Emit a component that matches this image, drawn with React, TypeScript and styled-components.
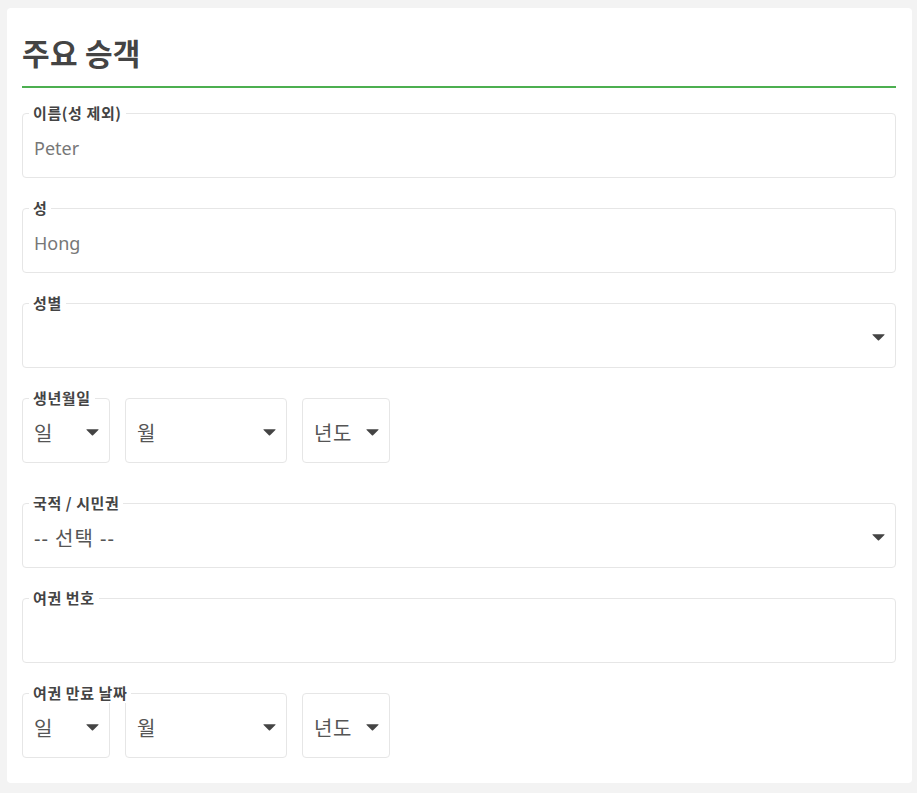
import React from "react";
import styled, { createGlobalStyle } from "styled-components";

const Global = createGlobalStyle`
  html, body { margin: 0; padding: 0; background: #f3f3f3; }
  body { font-family: "Noto Sans", "Noto Sans CJK KR", sans-serif; }
  * { box-sizing: border-box; }
`;

const Page = styled.div`
  padding: 8px 5px 10px 7px;
`;

const Card = styled.section`
  background: #fff;
  border-radius: 4px;
  padding: 0 16px 25px 15px;
  display: flex;
  flex-direction: column;
`;

const Title = styled.h2`
  margin: 0;
  padding: 25px 0 15px 0;
  font-family: "Noto Sans CJK KR", sans-serif;
  font-size: 30px;
  font-weight: 700;
  line-height: 38px;
  letter-spacing: 0.3px;
  color: #444;
  border-bottom: 2px solid #4caf50;
`;

const Fields = styled.div`
  display: flex;
  flex-direction: column;
  padding-top: 25px;
`;

const Group = styled.div<{ $gap: number }>`
  position: relative;
  margin-bottom: ${(p) => p.$gap}px;
  &:last-child { margin-bottom: 0; }
`;

const Legend = styled.span`
  position: absolute;
  top: -10px;
  left: 7px;
  padding: 0 4px;
  background: #fff;
  font-family: "Noto Sans CJK KR", sans-serif;
  font-size: 15px;
  font-weight: 700;
  line-height: 20px;
  letter-spacing: 0.6px;
  color: #444;
  z-index: 1;
`;

const Box = styled.div<{ $w?: number }>`
  height: 65px;
  width: ${(p) => (p.$w ? `${p.$w}px` : "100%")};
  border: 1px solid #e6e6e6;
  border-radius: 4px;
  display: flex;
  align-items: center;
  justify-content: space-between;
  padding: 4px 10px 0 10px;
  background: #fff;
`;

const Value = styled.span<{ $size?: number; $color?: string; $ls?: number }>`
  font-family: "Noto Sans", "Noto Sans CJK KR", sans-serif;
  font-size: ${(p) => p.$size ?? 18}px;
  color: ${(p) => p.$color ?? "#777"};
  letter-spacing: ${(p) => p.$ls ?? 0}px;
  padding-left: 1px;
`;

const Row = styled.div`
  display: flex;
  gap: 15px;
`;

const Caret = () => (
  <svg width="13" height="7" viewBox="0 0 13 7" aria-hidden>
    <path d="M0.8 0.3 H12.2 Q12.9 0.3 12.4 0.9 L7.1 6.3 Q6.5 6.9 5.9 6.3 L0.6 0.9 Q0.1 0.3 0.8 0.3 Z" fill="#444" />
  </svg>
);

const TextField = ({ label, value, gap = 30 }: { label: string; value?: string; gap?: number }) => (
  <Group $gap={gap}>
    <Legend>{label}</Legend>
    <Box>
      <Value>{value}</Value>
    </Box>
  </Group>
);

const SelectField = ({ label, value, gap = 30 }: { label: string; value?: string; gap?: number }) => (
  <Group $gap={gap}>
    <Legend>{label}</Legend>
    <Box>
      <Value $size={20} $color="#555" $ls={1}>{value}</Value>
      <Caret />
    </Box>
  </Group>
);

const DateField = ({ label, gap = 40 }: { label: string; gap?: number }) => (
  <Group $gap={gap}>
    <Legend>{label}</Legend>
    <Row>
      <Box $w={88}>
        <Value $size={20} $color="#555">일</Value>
        <Caret />
      </Box>
      <Box $w={162}>
        <Value $size={20} $color="#555">월</Value>
        <Caret />
      </Box>
      <Box $w={88}>
        <Value $size={20} $color="#555" $ls={0.5}>년도</Value>
        <Caret />
      </Box>
    </Row>
  </Group>
);

export default function App() {
  return (
    <Page>
      <Global />
      <Card>
        <Title>주요 승객</Title>
        <Fields>
          <TextField label="이름(성 제외)" value="Peter" />
          <TextField label="성" value="Hong" />
          <SelectField label="성별" />
          <DateField label="생년월일" />
          <SelectField label="국적 / 시민권" value="-- 선택 --" />
          <TextField label="여권 번호" />
          <DateField label="여권 만료 날짜" gap={0} />
        </Fields>
      </Card>
    </Page>
  );
}
